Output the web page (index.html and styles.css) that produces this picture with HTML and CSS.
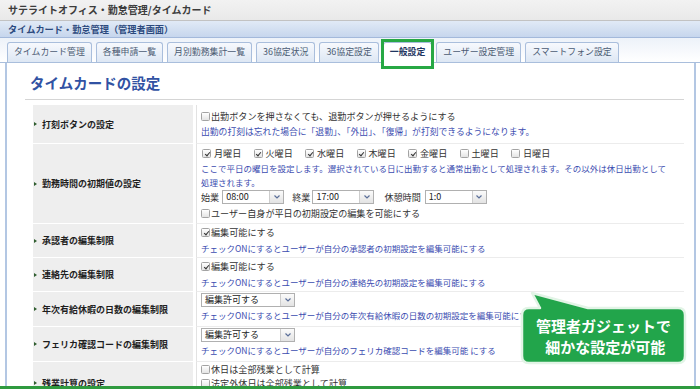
FILE: index.html
```html
<!DOCTYPE html>
<html lang="ja">
<head>
<meta charset="utf-8">
<title>タイムカード</title>
<link rel="stylesheet" href="styles.css">
</head>
<body>
<div class="titlebar">サテライトオフィス・勤怠管理/タイムカード</div>
<div class="header">タイムカード・勤怠管理（管理者画面）</div>
<div class="tabs">
  <div class="tab">タイムカード管理</div>
  <div class="tab">各種申請一覧</div>
  <div class="tab">月別勤務集計一覧</div>
  <div class="tab">36協定状況</div>
  <div class="tab">36協定設定</div>
  <div class="tab active">一般設定<span class="hl"></span></div>
  <div class="tab">ユーザー設定管理</div>
  <div class="tab">スマートフォン設定</div>
</div>
<div class="panel">
  <h1>タイムカードの設定</h1>
  <div class="settings">
    <div class="label">打刻ボタンの設定</div>
    <div class="val v1">
      <div class="line"><span class="cb"></span>出勤ボタンを押さなくても、退勤ボタンが押せるようにする</div>
      <div class="line note">出勤の打刻は忘れた場合に「退勤」、「外出」、「復帰」が打刻できるようになります。</div>
    </div>

    <div class="label">勤務時間の初期値の設定</div>
    <div class="val v2">
      <div class="line days">
        <span class="day"><span class="cb on"></span>月曜日</span>
        <span class="day"><span class="cb on"></span>火曜日</span>
        <span class="day"><span class="cb on"></span>水曜日</span>
        <span class="day"><span class="cb on"></span>木曜日</span>
        <span class="day"><span class="cb on"></span>金曜日</span>
        <span class="day"><span class="cb"></span>土曜日</span>
        <span class="day"><span class="cb"></span>日曜日</span>
      </div>
      <div class="note note2">ここで平日の曜日を設定します。選択されている日に出勤すると通常出勤として処理されます。その以外は休日出勤として<br>処理されます。</div>
      <div class="timerow">
        <span class="tl">始業</span>
        <span class="sel"><span class="sv">08:00</span><span class="arr"><svg width="6" height="4" viewBox="0 0 6 4"><path d="M0.5 0.5 L3 3 L5.5 0.5" fill="none" stroke="#5b6f99" stroke-width="1.2"/></svg></span></span>
        <span class="tl t2">終業</span>
        <span class="sel"><span class="sv">17:00</span><span class="arr"><svg width="6" height="4" viewBox="0 0 6 4"><path d="M0.5 0.5 L3 3 L5.5 0.5" fill="none" stroke="#5b6f99" stroke-width="1.2"/></svg></span></span>
        <span class="tl t3">休憩時間</span>
        <span class="sel"><span class="sv">1:0</span><span class="arr"><svg width="6" height="4" viewBox="0 0 6 4"><path d="M0.5 0.5 L3 3 L5.5 0.5" fill="none" stroke="#5b6f99" stroke-width="1.2"/></svg></span></span>
      </div>
      <div class="line"><span class="cb"></span>ユーザー自身が平日の初期設定の編集を可能にする</div>
    </div>

    <div class="label">承認者の編集制限</div>
    <div class="val v3">
      <div class="line"><span class="cb on"></span>編集可能にする</div>
      <div class="line note">チェックONにするとユーザーが自分の承認者の初期設定を編集可能にする</div>
    </div>

    <div class="label">連絡先の編集制限</div>
    <div class="val v3">
      <div class="line"><span class="cb on"></span>編集可能にする</div>
      <div class="line note">チェックONにするとユーザーが自分の連絡先の初期設定を編集可能にする</div>
    </div>

    <div class="label">年次有給休暇の日数の編集制限</div>
    <div class="val v5">
      <span class="sel wide"><span class="sv">編集許可する</span><span class="arr"><svg width="6" height="4" viewBox="0 0 6 4"><path d="M0.5 0.5 L3 3 L5.5 0.5" fill="none" stroke="#5b6f99" stroke-width="1.2"/></svg></span></span>
      <div class="line note">チェックONにするとユーザーが自分の年次有給休暇の日数の初期設定を編集可能にする</div>
    </div>

    <div class="label">フェリカ確認コードの編集制限</div>
    <div class="val v5">
      <span class="sel wide"><span class="sv">編集許可する</span><span class="arr"><svg width="6" height="4" viewBox="0 0 6 4"><path d="M0.5 0.5 L3 3 L5.5 0.5" fill="none" stroke="#5b6f99" stroke-width="1.2"/></svg></span></span>
      <div class="line note">チェックONにするとユーザーが自分のフェリカ確認コードを編集可能 にする</div>
    </div>

    <div class="label">残業計算の設定</div>
    <div class="val v7">
      <div class="line"><span class="cb"></span>休日は全部残業として計算</div>
      <div class="line"><span class="cb"></span>法定外休日は全部残業として計算</div>
      <div class="line"><span class="cb"></span>深夜は全部残業として計算</div>
    </div>
  </div>
</div>

<div class="callout">
  <svg class="bubble" width="167" height="74" viewBox="0 0 167 74">
    <path d="M9 17 L20 17 L12 2 L68 17 L158 17 Q165 17 165 24 L165 65 Q165 72 158 72 L9 72 Q2 72 2 65 L2 24 Q2 17 9 17 Z" fill="#22a54b" stroke="#e2f4e6" stroke-width="2.5" stroke-linejoin="round"/>
  </svg>
  <div class="ctext">
    <span>管理者ガジェットで</span>
    <span>&nbsp;細かな設定が可能</span>
  </div>
</div>
<div class="bottombar"></div>
</body>
</html>
```

FILE: styles.css
```css
* { box-sizing: border-box; }
html, body {
  margin: 0;
  padding: 0;
}
body {
  width: 700px;
  height: 389px;
  overflow: hidden;
  position: relative;
  background: #fff;
  font-family: "Noto Sans CJK JP", "Noto Sans", sans-serif;
  color: #333;
}

.titlebar {
  height: 21px;
  line-height: 20px;
  padding-left: 8px;
  font-size: 10px;
  font-weight: bold;
  color: #3c3c3c;
  background: linear-gradient(#f2f2f2, #e9e9e9);
  border-bottom: 1px solid #c2c2c2;
}

.header {
  height: 17px;
  line-height: 16px;
  padding-left: 8px;
  font-size: 9.2px;
  font-weight: bold;
  color: #2c4a7e;
  background: linear-gradient(#e1eaf6, #c6d6ed);
  border-bottom: 1px solid #a3b9db;
}

.tabs {
  display: flex;
  gap: 4px;
  height: 25px;
  padding: 4px 0 0 7px;
  background: linear-gradient(#edf2f9, #ffffff);
  border-bottom: 1px solid #a9bedc;
}
.tab {
  height: 20px;
  line-height: 18px;
  padding: 0 6px;
  font-size: 8.9px;
  color: #4b5b73;
  white-space: nowrap;
  background: linear-gradient(#f7f9fd, #dde7f4);
  border: 1px solid #a9bedc;
  border-bottom: none;
  border-radius: 3px 3px 0 0;
}
.tab.active {
  position: relative;
  height: 21px;
  background: #fff;
  font-weight: bold;
  color: #1f3560;
}
.hl {
  position: absolute;
  left: -3px;
  top: -4px;
  right: -3px;
  bottom: -6px;
  border: 3px solid #27a844;
}

.panel {
  margin: 0 4px 0 5px;
  height: 330px;
  padding: 10px 10px 0 18px;
  border-left: 2px solid #b3c7e3;
  border-right: 2px solid #b3c7e3;
  background: #fff;
}
h1 {
  margin: 0;
  padding: 0 0 6px 5px;
  height: 27px;
  line-height: 20px;
  font-size: 14.5px;
  font-weight: bold;
  color: #3152a3;
  border-bottom: 1px solid #d5d5d5;
}

.settings {
  display: grid;
  grid-template-columns: 160px 1fr;
  column-gap: 3px;
  margin: 5px 0 0 8px;
}
.label {
  display: flex;
  align-items: center;
  padding-left: 1px;
  background: #eeeeee;
  border-bottom: 1px solid #fff;
  font-size: 9px;
  font-weight: bold;
  color: #1e1e1e;
}
.label::before {
  content: "";
  width: 0;
  height: 0;
  border-left: 3px solid #2f5d2f;
  border-top: 2.5px solid transparent;
  border-bottom: 2.5px solid transparent;
  margin-right: 5px;
}
.val {
  border-left: 1px solid #e2e2e2;
  border-bottom: 1px solid #ececec;
  padding-left: 4px;
  font-size: 9.1px;
  color: #333;
}
.line {
  height: 16px;
  line-height: 16px;
  white-space: nowrap;
}
.note {
  font-size: 8.5px;
  color: #3b4cb0;
}
.v1 .note { font-size: 8.8px; }
.v1 { padding-top: 3px; padding-bottom: 3px; }
.v2 { padding-top: 1px; padding-bottom: 2px; }
.v3 { padding-top: 0; padding-bottom: 1px; }
.v5 { padding-top: 1px; padding-bottom: 3px; }
.v7 .line { height: 14px; line-height: 14px; }

.cb {
  display: inline-block;
  position: relative;
  width: 9px;
  height: 9px;
  margin-right: 1px;
  vertical-align: -1px;
  border: 1px solid #a3a3a3;
  border-radius: 1.5px;
  background: linear-gradient(#ffffff, #e4e4e4);
}
.cb.on::after {
  content: "";
  position: absolute;
  left: 2.5px;
  top: 0.5px;
  width: 2px;
  height: 4px;
  border-right: 1.4px solid #333;
  border-bottom: 1.4px solid #333;
  transform: rotate(40deg);
}
.days {
  display: flex;
  padding-left: 1px;
}
.day {
  width: 51.5px;
}
.day .cb { margin-right: 3px; }

.note2 {
  line-height: 14px;
  white-space: nowrap;
}

.timerow {
  display: flex;
  align-items: center;
  height: 15px;
  margin-bottom: 1px;
  white-space: nowrap;
}
.tl { margin-right: 3px; }
.t2 { margin-left: 8px; margin-right: 2px; }
.t3 { margin-left: 10px; margin-right: 4px; }

.sel {
  display: inline-flex;
  width: 62px;
  height: 14px;
  border: 1px solid #b0b0b0;
  background: #fff;
  vertical-align: top;
}
.sel.wide { width: 94px; }
.sv {
  flex: 1;
  padding-left: 3px;
  font-size: 9px;
  line-height: 12px;
  color: #222;
}
.arr {
  width: 14px;
  display: flex;
  align-items: center;
  justify-content: center;
  border-left: 1px solid #cdcdcd;
  background: linear-gradient(#fbfbfb, #e3e3e3);
}

.callout {
  position: absolute;
  left: 520px;
  top: 291px;
  width: 167px;
  height: 74px;
}
.bubble {
  position: absolute;
  left: 0;
  top: 0;
}
.ctext {
  position: relative;
  margin-top: 17px;
  height: 55px;
  display: flex;
  flex-direction: column;
  align-items: center;
  justify-content: center;
  font-size: 15px;
  line-height: 21px;
  font-weight: bold;
  color: #fff;
  white-space: nowrap;
}

.bottombar {
  position: absolute;
  left: 0;
  bottom: 0;
  width: 700px;
  height: 3px;
  background: #2f9a3f;
}
```
